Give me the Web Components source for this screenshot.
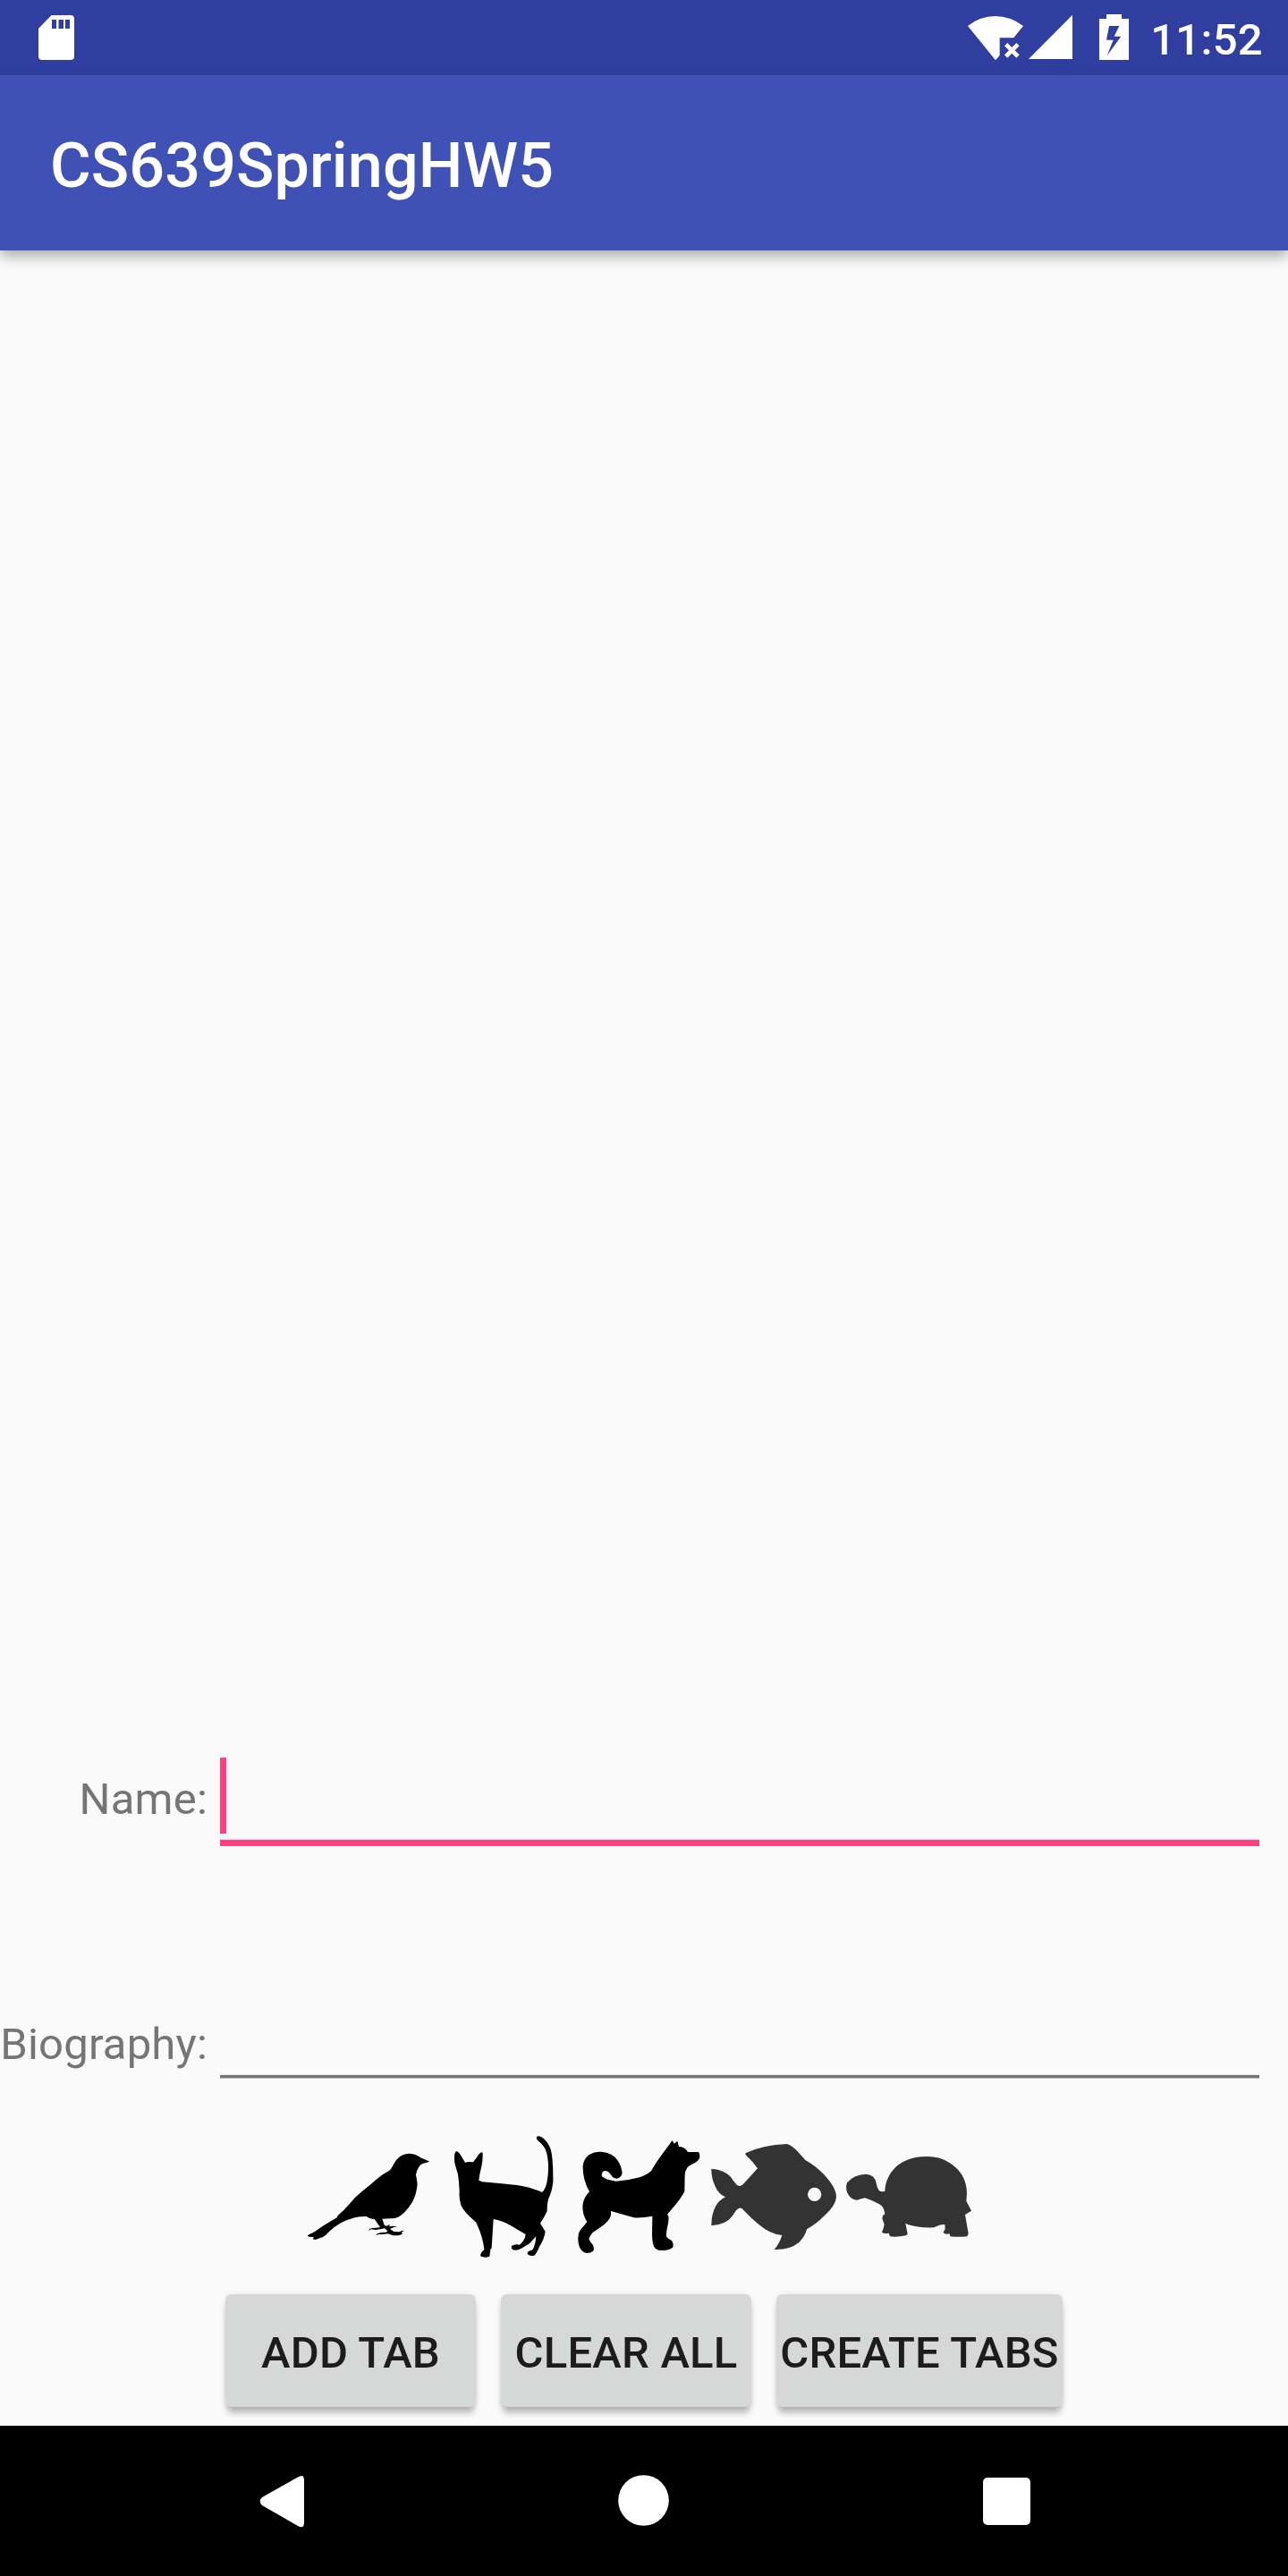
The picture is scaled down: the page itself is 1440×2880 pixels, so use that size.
<!DOCTYPE html>
<html lang="en">
<head>
<meta charset="utf-8">
<title>CS639SpringHW5</title>
<style>
html,body{margin:0;padding:0;background:#fafafa}
body{width:1440px;height:2880px;overflow:hidden;font-family:Roboto,"Liberation Sans",sans-serif}
</style>
</head>
<body>
<hw-screen></hw-screen>
<script>
const define = (name, html) => customElements.define(name, class extends HTMLElement {
  constructor() {
    super();
    const t = document.createElement('template');
    t.innerHTML = html;
    this.attachShadow({mode: 'open'}).append(t.content.cloneNode(true));
  }
});

define('status-bar', `
<style>
:host{display:flex;height:84px;background:#303f9f;color:#fff;align-items:flex-start;box-sizing:border-box;padding:0 28px 0 43px}
svg{display:block;fill:#fff;flex:none}
.gap{flex:1}
time{display:flex;justify-content:flex-end;box-sizing:border-box;font-size:49px;line-height:58px;font-weight:500;padding:16px 0 0 0;width:148px;white-space:nowrap;letter-spacing:.3px}
</style>
<svg width="40" height="84" viewBox="43 0 40 84"><path fill-rule="evenodd" d="M57.5 17H79q4 0 4 4V63q0 4-4 4H47q-4 0-4-4V32ZM58 22v10h5V22ZM65.5 22v10h5.500V22ZM73 22v10h5V22Z"/></svg>
<span class="gap"></span>
<svg width="148" height="84" viewBox="0 0 444 252"><path d="M66 87Q108 54 158 54T252 87L220 127H173V186L159 202Z"/><path d="M194 149l40 40M234 149l-40 40" fill="none" stroke="#fff" stroke-width="14"/><path d="M417 50V198H270Z"/></svg>
<svg width="56" height="84" viewBox="444 0 168 252"><path fill-rule="evenodd" d="M531 48H582V63H606V201H507V63H531ZM540 87L531 134H554L533 187L580 122H557L574 87Z"/></svg>
<time>11:52</time>`);

define('app-bar', `
<style>
:host{display:flex;height:196px;box-sizing:border-box;padding:60px 56px 0;background:#3f51b5;color:#fff;box-shadow:0 7px 14px rgba(0,0,0,.3);z-index:1}
h1{margin:0;font-size:70px;line-height:82px;font-weight:500;white-space:nowrap;letter-spacing:.12px}
</style><h1><slot></slot></h1>`);

define('form-field', `
<style>
:host{display:flex;align-items:flex-start;height:var(--h);color:#757575}
label{width:232px;flex:none;text-align:right;font-size:49px;line-height:58px;white-space:nowrap;padding-top:var(--label-top);letter-spacing:.2px}
.input{flex:1;margin:0 32px 0 14px;display:flex;flex-direction:column;justify-content:flex-end;height:100%}
.line{height:3px;background:#757575;border-top:1px solid #e8e8e8;border-bottom:1px solid #bdbdbd}
.caret{display:none;width:7px;height:85px;margin-bottom:6px;background:#ff4081}
:host([focused]) .caret{display:block}
:host([focused]) .line{height:7px;background:#ff4081;border-top-color:#f4d9e2;border-bottom:0}
</style>
<label><slot></slot></label><div class="input"><div class="caret"></div><div class="line"></div></div>`);

define('pet-icons', `
<style>
:host{display:flex;height:170px;padding-left:330px}
svg{display:block;overflow:visible;flex:none;height:170px}
.g{fill:#333}
</style>
<svg width="160" viewBox="0 0 480 510"><path d="M451 140L433 132Q421 127 414 122Q400 113 381 113Q361 114 349 125Q337 134 331 148Q324 163 316 170Q293 181 270 202Q245 225 225 239Q200 259 183 281Q165 302 143 321L140 328L106 348Q83 362 67 374L41 388L46 392L63 393L59 400L68 402L93 393Q104 387 113 376Q133 357 153 346Q178 333 203 327Q222 323 240 324Q248 332 266 333L285 360Q275 363 259 363L249 366L247 372L254 367L270 369L288 366L300 364L310 373L305 377L289 378L275 382L271 388L279 384L294 384L311 382L328 388L347 388L359 383L357 376L367 374L357 372L350 376L331 375L318 366L332 360L344 359L326 356L315 358L318 351L306 356L299 353L292 332L335 330Q352 325 365 312Q383 293 393 276Q407 249 410 216Q408 201 405 184Q407 171 414 160Q419 150 428 147Z"/></svg>
<svg width="150" viewBox="0 0 450 510"><path d="M61 105Q70 108 78 123L90 143Q100 140 117 142Q127 130 135 117Q145 105 149 111Q150 132 145 157Q138 182 136 203L147 208Q200 213 241 217Q290 221 318 232Q336 237 348 243Q362 230 366 200Q371 165 368 138Q365 105 354 90Q344 77 334 70Q328 64 330 56Q340 52 351 61Q370 77 377 99Q386 130 385 207Q382 240 370 263Q365 279 365 305Q361 317 342 347L359 375Q355 402 339 425Q331 446 322 455Q308 459 299 450Q299 438 315 437Q326 422 328 391L306 415L281 430Q268 440 250 436Q244 430 246 423Q257 416 273 419Q291 405 293 384Q274 373 242 354Q213 338 185 333L179 430L175 434L172 458Q156 465 141 457Q142 444 154 436Q152 410 140 375L127 344Q84 308 76 286Q69 264 71 239Q70 211 66 183L55 145Q51 110 61 105Z"/></svg>
<svg width="145" viewBox="30 0 435 510"><path d="M365 69L371 80L382 71L387 90Q408 91 417 108H453Q459 114 456 130Q448 143 430 149Q408 159 407 185L406 240Q395 263 373 288L348 317L352 323Q354 340 348 361Q344 380 345 392Q353 401 363 405Q371 418 366 428Q355 438 327 438Q311 438 304 426Q298 413 297 386L298 323Q267 329 236 328L159 306V320Q154 340 124 360L99 377Q89 387 85 399L91 411Q104 421 101 438Q93 448 76 447Q56 441 51 418Q45 385 56 370Q68 357 79 342Q61 315 65 282Q69 259 87 241Q64 200 65 155Q67 132 86 117Q102 107 124 107Q151 108 171 124Q193 145 197 178Q194 195 178 197Q167 197 161 187Q149 169 138 171Q126 174 129 190Q145 203 176 206Q212 204 246 195Q274 189 294 172Q306 149 328 119Z"/></svg>
<svg class="g" width="160" viewBox="15 0 480 510"><path fill-rule="evenodd" d="M160 112Q218 84 300 81Q318 87 337 108L361 135Q394 153 421 181Q465 227 465 258Q464 285 428 319Q400 348 366 367Q361 390 340 411Q309 437 257 435Q274 416 283 387Q243 383 204 350Q180 330 156 305Q143 287 129 304L117 322Q97 351 46 355Q46 316 60 290Q71 270 93 259Q69 250 57 219Q46 195 46 164Q99 168 119 203L130 217Q141 228 153 215L201 163Q186 141 161 118ZM392 227A23 23 0 1 0 392 273A23 23 0 1 0 392 227Z"/></svg>
<svg class="g" width="155" viewBox="30 0 465 510"><path d="M97 182Q129 182 134 213Q137 230 144 238Q150 243 163 239Q164 212 176 190Q191 160 222 142Q258 122 306 123Q349 123 381 145Q437 181 438 247L436 272L453 305L432 318L443 382L439 391Q407 394 382 391L380 382Q363 386 359 377L365 366L364 351Q348 350 328 361Q262 363 232 347L239 383L234 388Q204 394 180 391L176 380Q159 383 153 377L158 364L161 351L154 331L156 321L163 316Q161 291 143 282Q121 270 96 262Q79 266 70 269Q45 267 36 242Q30 221 37 210Q58 185 97 182Z"/></svg>`);

define('md-button', `
<style>
:host{display:block;width:var(--w,280px)}
button{display:flex;justify-content:center;width:100%;height:126px;border:0;border-radius:7px;margin:0;padding:37px 0 0;box-sizing:border-box;background:#d6d8d7;color:#1c1c1c;font:500 49px/58px Roboto,"Liberation Sans",sans-serif;letter-spacing:.2px;white-space:nowrap;box-shadow:0 9px 7px -2px rgba(0,0,0,.24),0 1px 7px rgba(0,0,0,.1)}
</style><button><slot></slot></button>`);

define('nav-bar', `
<style>
:host{display:flex;height:168px;background:#000;z-index:1}
svg{display:block;fill:#fff}
</style>
<svg width="1440" height="168" viewBox="0 2712 1440 168"><path d="M293 2792L333 2769.500Q340 2765 340 2773V2820Q340 2828 333 2824L293 2801Q288.500 2796.500 293 2792Z"/><circle cx="719.500" cy="2795.500" r="28.300"/><rect x="1099" y="2770" width="53" height="53" rx="5"/></svg>`);

define('hw-screen', `
<style>
:host{display:flex;flex-direction:column;width:1440px;height:2880px;background:#fafafa}
main{flex:1;display:flex;flex-direction:column;justify-content:flex-end;padding-bottom:21px}
.name{--h:99px;--label-top:18px}
.bio{--h:85px;--label-top:18px;margin-top:175px}
pet-icons{margin-top:46px}
.buttons{display:flex;gap:28px;padding-left:252px;margin-top:25px}
.wide{--w:320px}
</style>
<status-bar></status-bar>
<app-bar>CS639SpringHW5</app-bar>
<main>
<form-field class="name" focused>Name:</form-field>
<form-field class="bio">Biography:</form-field>
<pet-icons></pet-icons>
<div class="buttons"><md-button>ADD TAB</md-button><md-button>CLEAR ALL</md-button><md-button class="wide">CREATE TABS</md-button></div>
</main>
<nav-bar></nav-bar>`);
</script>
</body>
</html>
